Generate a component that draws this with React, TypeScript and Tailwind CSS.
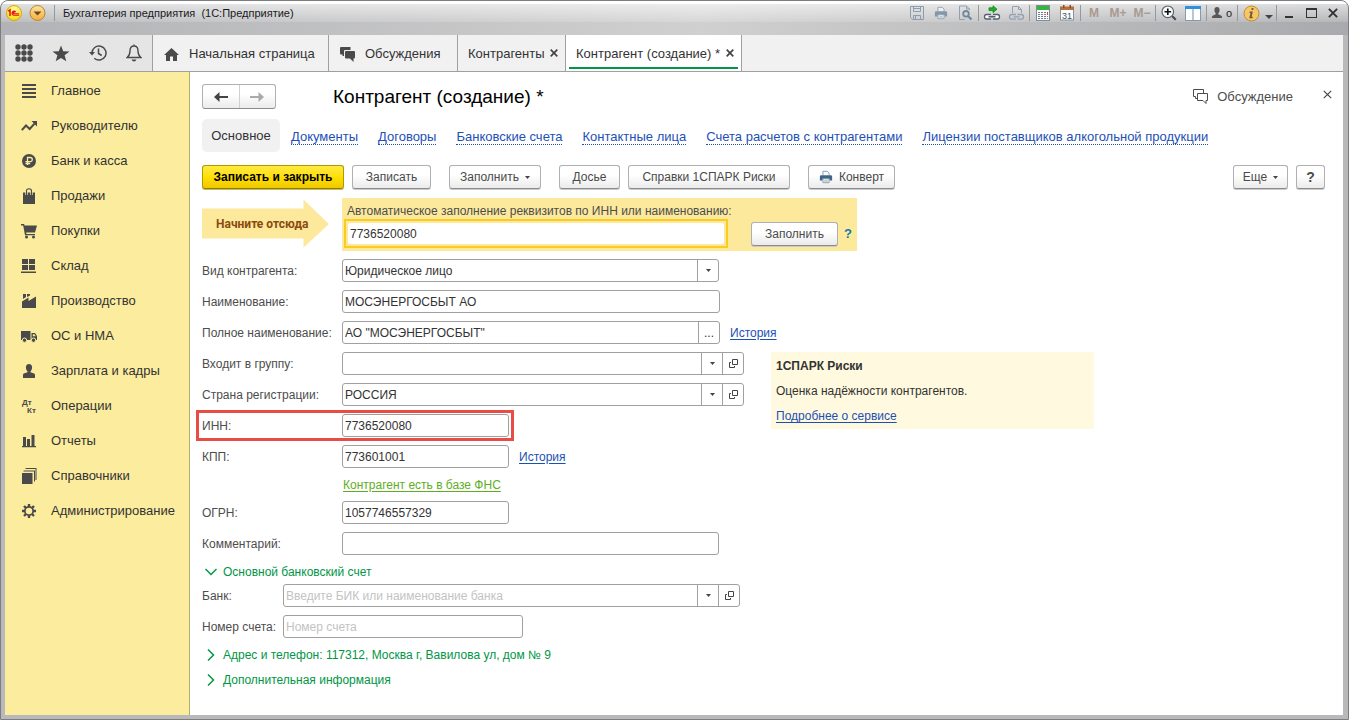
import React, { useState } from "react";

type Kids = { children?: React.ReactNode };

/* ---------- title bar icons ---------- */

const LogoIcon = () => (
  <svg width="16" height="16" viewBox="0 0 16 16" aria-hidden="true">
    <defs>
      <radialGradient id="logoFill" cx="0.5" cy="0.3" r="0.8">
        <stop offset="0" stopColor="#fffbb0" />
        <stop offset="0.6" stopColor="#ffe833" />
        <stop offset="1" stopColor="#f0c000" />
      </radialGradient>
    </defs>
    <circle cx="8" cy="8" r="7.5" fill="url(#logoFill)" stroke="#d8a916" />
    <path d="M2.2 6.2 4 5v6" fill="none" stroke="#e3120b" strokeWidth="1.5" />
    <path d="M9.700 6.800A2.100 2.100 0 1 0 8 10.300h5.200M8.900 7.600a.9.9 0 1 0-.8 1.200h5" fill="none" stroke="#e3120b" strokeWidth="1.100" />
  </svg>
);

const RoundArrowIcon = () => (
  <svg width="17" height="16" viewBox="0 0 17 16" aria-hidden="true">
    <defs>
      <linearGradient id="roundFill" x1="0" y1="0" x2="0" y2="1">
        <stop offset="0" stopColor="#fce3a0" />
        <stop offset="1" stopColor="#f5ae3d" />
      </linearGradient>
    </defs>
    <circle cx="8.5" cy="8" r="7.5" fill="url(#roundFill)" stroke="#b9832f" />
    <path d="M4.5 6.500h8l-4 4z" fill="#6a4b1e" />
  </svg>
);

const SaveIcon = () => (
  <svg width="16" height="16" viewBox="0 0 16 16" fill="none" stroke="#8c9db0" aria-hidden="true">
    <path d="M1.5 1.5h13v13h-11l-2-2z" />
    <path d="M4.5 1.5v5h7v-5M4.5 14.5v-4h7v4M5 3.5h6M6.500 11v3" />
  </svg>
);

const PrinterIcon = ({ color, dark }: { color: string; dark: string }) => (
  <svg width="14" height="14" viewBox="0 0 16 16" aria-hidden="true">
    <path d="M4.500 6V1.500h5l2 2V6" fill="#fff" fillOpacity="0.5" stroke={color} />
    <path d="M1 7.500q0-1.500 1.500-1.500h11q1.500 0 1.500 1.500V12h-3v-2H4v2H1z" fill={dark} />
    <path d="M4.500 10h7v4.500h-7z" fill="#fff" fillOpacity="0.7" stroke={color} />
    <path d="M6 12.500h4" stroke={color} />
  </svg>
);

const PreviewIcon = () => (
  <svg width="16" height="16" viewBox="0 0 16 16" fill="none" stroke="#8fa0b2" aria-hidden="true">
    <path d="M12.500 5v-1l-3-3h-7v13.500h5M9.500 1v3h3" />
    <circle cx="9" cy="8.800" r="2.800" stroke="#71879c" strokeWidth="1.800" />
    <path d="m11 11 3.500 3.500" stroke="#71879c" strokeWidth="2.200" />
  </svg>
);

const LinkIcon = () => (
  <svg width="18" height="16" viewBox="0 0 18 16" fill="none" aria-hidden="true">
    <path d="M6 2.800h4V.8l4 3.400-4 3.400v-2H6z" fill="#16b31c" stroke="#0b7d13" strokeWidth=".7" />
    <path d="M8 9.500H3.500q-2 0-2 2.200t2 2.300H8M10 9.500h4.500q2 0 2 2.200t-2 2.300H10" fill="#fff" stroke="#55606c" strokeWidth="1.300" />
    <path d="M5.500 11.700h7" stroke="#55606c" strokeWidth="1.600" />
  </svg>
);

const LinkDocIcon = () => (
  <svg width="17" height="16" viewBox="0 0 17 16" fill="none" stroke="#93a1b1" aria-hidden="true">
    <path d="M4.500 8V1.500h6l3 3V8M10.500 1.500v3h3" />
    <path d="M8 9.500H3.500q-2 0-2 2.300t2 2.300H8M9.500 9.500h4q2 0 2 2.300t-2 2.300h-4M5.500 11.800h6" strokeWidth="1.300" />
  </svg>
);

const CalculatorIcon = () => (
  <svg width="14" height="16" viewBox="0 0 14 16" aria-hidden="true">
    <rect x=".5" y=".5" width="13" height="15" fill="#f7f9fa" stroke="#7f8d98" />
    <rect x="1" y="1" width="12" height="4" fill="#35b53a" />
    <g fill="#75828d">
      <path d="M2 7h2v1H2zM5 7h2v1H5zM2 9h2v1H2zM5 9h2v1H5zM8 9h2v1H8zM2 11h2v1H2zM5 11h2v1H5zM8 11h2v1H8zM11 11h1v1h-1zM2 13h2v1H2zM5 13h2v1H5zM8 13h2v1H8zM11 13h1v1h-1zM8 7h2v1H8z" />
    </g>
    <path d="M11 7h1v3h-1z" fill="#e2383f" />
  </svg>
);

const CalendarIcon = () => (
  <svg width="14" height="16" viewBox="0 0 14 16" aria-hidden="true">
    <rect x=".5" y="2.500" width="13" height="12.500" fill="#fafcfd" stroke="#8494a5" />
    <path d="M0 1.500h14V5H0z" fill="#b5703e" />
    <path d="M3 0h1.500v3H3zM9.500 0H11v3H9.500z" fill="#8a4c22" />
    <text x="7" y="13.500" fontSize="9" fontFamily="Liberation Sans, sans-serif" textAnchor="middle" fill="#47525e">31</text>
  </svg>
);

const ZoomIcon = () => (
  <svg width="16" height="16" viewBox="0 0 16 16" fill="none" aria-hidden="true">
    <path d="m11 11 3.800 3.800" stroke="#3f4a55" strokeWidth="2" />
    <circle cx="6.800" cy="6.800" r="5.800" fill="#f6f8f9" stroke="#5a646e" strokeWidth="1.200" />
    <path d="M6.800 3.500v6.600M3.500 6.800h6.600" stroke="#111" strokeWidth="1.600" />
  </svg>
);

const PanesIcon = () => (
  <svg width="16" height="15" viewBox="0 0 16 15" aria-hidden="true">
    <rect x=".5" y=".5" width="15" height="14" fill="#fff" stroke="#8299ae" />
    <path d="M0 0h16v3H0z" fill="#2f8fe0" />
    <path d="M8 3v11" stroke="#7b8c9c" />
  </svg>
);

const UserIcon = () => (
  <svg width="10" height="12" viewBox="0 0 10 12" aria-hidden="true">
    <path d="M5 0c1.700 0 2.600 1.200 2.600 2.900C7.600 4.500 7 5.600 6.300 6v1.300l3 1.500q.7.400.7 1.500V11H0v-.7q0-1.100.7-1.500l3-1.500V6C3 5.600 2.400 4.500 2.400 2.900 2.400 1.200 3.300 0 5 0z" fill="#575757" />
  </svg>
);

const InfoIcon = () => (
  <svg width="17" height="17" viewBox="0 0 17 17" aria-hidden="true">
    <circle cx="8.500" cy="8.500" r="7.500" fill="#f7c766" stroke="#c08b35" />
    <path d="M8.700 3h1.900l-.4 2H8.300zM6.700 6.500h3.200l-1.300 5.300h1.300l-.3 1.400H6.200l1.300-5.300H6.400z" fill="#6f5c3d" />
  </svg>
);

/* ---------- command bar and section icons ---------- */

const GridDots = () => (
  <svg width="18" height="18" viewBox="0 0 18 18" fill="#4a4a4a" aria-hidden="true">
    {[3, 9, 15].map((y) => [3, 9, 15].map((x) => <circle key={x + "-" + y} cx={x} cy={y} r="2.700" />))}
  </svg>
);

const StarIcon = () => (
  <svg width="18" height="17" viewBox="0 0 18 17" fill="#4a4a4a" aria-hidden="true">
    <path d="m9 .5 2.200 5.700 6.300.3-4.900 3.800 1.700 6L9 12.900l-5.300 3.400 1.700-6L.5 6.500l6.300-.3z" />
  </svg>
);

const HistoryIcon = () => (
  <svg width="18" height="18" viewBox="0 0 18 18" fill="none" stroke="#4a4a4a" strokeWidth="1.500" aria-hidden="true">
    <path d="M3 9a7 7 0 1 1 2.300 5.200" />
    <path d="M0 8h6l-3 3.500z" fill="#4a4a4a" stroke="none" />
    <path d="M9.500 4.500v5l3.200 2" />
  </svg>
);

const BellIcon = () => (
  <svg width="16" height="18" viewBox="0 0 16 18" fill="none" stroke="#4a4a4a" strokeWidth="1.400" aria-hidden="true">
    <path d="M8 2C5.200 2 4 4.200 4 7c0 3.500-1 5-2.800 6.500h13.600C13 12 12 10.500 12 7c0-2.800-1.200-5-4-5zM8 .5V2" />
    <path d="M5.500 15.500h5q-.8 2-2.500 2t-2.500-2z" fill="#4a4a4a" stroke="none" />
  </svg>
);

const HomeIcon = () => (
  <svg width="15" height="13" viewBox="0 0 15 13" fill="#4a4a4a" aria-hidden="true">
    <path d="M7.500 0 15 7h-2v6H9V8.500H6V13H2V7H0z" />
  </svg>
);

const ChatsIcon = () => (
  <svg width="15" height="15" viewBox="0 0 15 15" fill="#4a4a4a" aria-hidden="true">
    <path d="M1 0h9.500v3H5Q4 3 4 4v5H2.500v-1.500H1q-1 0-1-1V1q0-1 1-1z" />
    <path d="M6 4h8q1 0 1 1v5.500q0 1-1 1h-.5V15L10 11.500H6q-1 0-1-1V5q0-1 1-1z" />
  </svg>
);

const ChatOutlineIcon = () => (
  <svg width="15" height="15" viewBox="0 0 15 15" fill="none" stroke="#4d4d4d" aria-hidden="true">
    <path d="M4.500 9.500H2.500v-2h-2v-7h10v4" />
    <path d="M4.500 4.500h10v7h-1.500v3l-3-3H4.500z" />
  </svg>
);

const sectionIcons: Record<string, React.ReactNode> = {
  main: <path d="M1 1h14v2H1zM1 5h14v2H1zM1 9h14v2H1zM1 13h14v2H1z" />,
  chart: (
    <>
      <path d="m.8 12.200 4.200-4.700 3.700 3.500 4.800-5.300" fill="none" stroke="#4a4a4a" strokeWidth="2" />
      <path d="M10.500 3H16v5.500z" />
    </>
  ),
  ruble: (
    <>
      <circle cx="8" cy="8" r="7" />
      <path d="M6.500 12V4.500h2.700a2 2 0 0 1 0 4.200H4.500M4.500 10.500h4.700" fill="none" stroke="#fcec9e" strokeWidth="1.300" />
    </>
  ),
  bag: (
    <>
      <path d="M2 4.500h12V16H2z" />
      <path d="M5.500 7V3q0-2.200 2.500-2.200T10.500 3v4" fill="none" stroke="#fcec9e" strokeWidth="2.400" />
      <path d="M5.500 7V3q0-2.200 2.500-2.200T10.500 3v4" fill="none" stroke="#4a4a4a" strokeWidth="1.100" />
    </>
  ),
  cart: (
    <>
      <path d="M0 1h3l.6 1.500H16L14 9.500H5.200l.2 1.500H14v1.200H4L2.200 2.400H0z" />
      <circle cx="5.500" cy="14" r="1.500" />
      <circle cx="12.500" cy="14" r="1.500" />
    </>
  ),
  store: <path d="M1 1h6v5H1zM8 1h6v5H8zM1 7h6v5H1zM8 7h6v5H8zM0 13.500h15V15H0z" />,
  factory: <path d="M2 1h3v3L2 6zM6 1h3v1.500L6 4zM1 8.500l6.500-4V8l7.500-4.500V15H1z" />,
  truck: (
    <>
      <path d="M0 3h9.500v9H0zM10.500 5H14l2 3v4h-5.500z" />
      <path d="M11.800 6.200h1.700l1.200 2h-2.900z" fill="#fcec9e" />
      <circle cx="3.500" cy="12.200" r="2.200" stroke="#fcec9e" />
      <circle cx="12.500" cy="12.200" r="2.200" stroke="#fcec9e" />
    </>
  ),
  person: <path d="M8 1c2 0 3.100 1.400 3.100 3.300 0 1.900-.8 3.500-1.600 4v.9l3.700 1.300q.8.400.8 1.700V15H2v-2.800q0-1.300.8-1.700l3.700-1.300v-.9c-.8-.5-1.600-2.100-1.600-4C4.900 2.400 6 1 8 1z" />,
  ops: (
    <>
      <text x="1" y="6.500" fontSize="8" fontWeight="700" fontFamily="Liberation Sans, sans-serif">Дт</text>
      <text x="6" y="15" fontSize="8" fontWeight="700" fontFamily="Liberation Sans, sans-serif">Кт</text>
    </>
  ),
  bars: <path d="M2 4h3v9H2zM6 6h3v7H6zM10.500 2h3v11h-3zM1 13h14v1.200H1z" />,
  books: <path d="M1 5h10.500v11H1zM2.500 2.500H14v11h-1v-10H2.500zM4.500 0H15.500v12h-1V1h-10z" />,
  gear: (
    <>
      <g stroke="#4a4a4a" strokeWidth="2.400">
        <path d="M8 1v14M1 8h14M3 3l10 10M13 3 3 13" />
      </g>
      <circle cx="8" cy="8" r="5" />
      <circle cx="8" cy="8" r="3.300" fill="#fcec9e" />
    </>
  ),
};

const sections = [
  ["main", "Главное"],
  ["chart", "Руководителю"],
  ["ruble", "Банк и касса"],
  ["bag", "Продажи"],
  ["cart", "Покупки"],
  ["store", "Склад"],
  ["factory", "Производство"],
  ["truck", "ОС и НМА"],
  ["person", "Зарплата и кадры"],
  ["ops", "Операции"],
  ["bars", "Отчеты"],
  ["books", "Справочники"],
  ["gear", "Администрирование"],
];

const links = [
  "Документы",
  "Договоры",
  "Банковские счета",
  "Контактные лица",
  "Счета расчетов с контрагентами",
  "Лицензии поставщиков алкогольной продукции",
];

const CaretIcon = () => (
  <svg width="5" height="3" viewBox="0 0 5 3" aria-hidden="true">
    <path d="M0 0h5L2.500 3z" fill="#444" />
  </svg>
);

const OpenIcon = () => (
  <svg width="9" height="9" viewBox="0 0 9 9" fill="none" stroke="#444" aria-hidden="true">
    <path d="M3.500.5h5v5h-5zM2 3.500H.5v5h5V7" />
  </svg>
);

const CrossIcon = ({ size, stroke, width }: { size: number; stroke: string; width: number }) => (
  <svg width={size} height={size} viewBox="0 0 8 8" fill="none" stroke={stroke} strokeWidth={width} aria-hidden="true">
    <path d="m.7.7 6.600 6.600M7.300.7.7 7.300" />
  </svg>
);

const ArrowIcon = ({ color, flip }: { color: string; flip?: boolean }) => (
  <svg width="14" height="10" viewBox="0 0 14 10" className={flip ? "rotate-180" : ""} aria-hidden="true">
    <path d="M0 5 5.500 0v10z" fill={color} />
    <path d="M4 5h10" stroke={color} strokeWidth="2" />
  </svg>
);

const ChevronIcon = ({ open }: { open: boolean }) => (
  <svg width="14" height="14" viewBox="0 0 14 14" fill="none" stroke="#009646" strokeWidth="1.500" aria-hidden="true">
    {open ? <path d="m1.500 4 5.500 5.500L12.500 4" /> : <path d="M4 1.500 9.500 7 4 12.500" />}
  </svg>
);

/* ---------- building blocks ---------- */

const Sep = () => <span className="mx-px h-4 w-px bg-[#97989b]" />;

const TitleButton = ({ label, className = "w-6", children }: Kids & { label: string; className?: string }) => (
  <button type="button" aria-label={label} className={"flex h-5 items-center justify-center " + className}>
    {children}
  </button>
);

const Button = ({ className = "", label, children }: Kids & { className?: string; label?: string }) => (
  <button
    type="button"
    aria-label={label}
    className={
      "flex h-6 shrink-0 items-center justify-center whitespace-nowrap rounded-[3px] border border-[#b0b0b0] border-b-[#8c8c8c] bg-linear-to-b from-white from-40% to-[#ebebeb] text-[#4a4a4a] shadow-[0_1px_0_#c9c9c9] " +
      className
    }
  >
    {children}
  </button>
);

const inputClass = "h-full w-full min-w-0 flex-1 bg-transparent pl-0.5 text-[#333] outline-none placeholder:text-[#c3c3c3]";

type FieldProps = {
  id: string;
  label: string;
  width: string;
  value?: string;
  placeholder?: string;
  buttons?: ("caret" | "open" | "dots")[];
  labelWidth?: string;
  children?: React.ReactNode;
};

const buttonNames = { caret: "Выбрать из списка", open: "Открыть", dots: "Изменить" };

const Field = ({ id, label, width, value = "", placeholder, buttons = [], labelWidth = "w-[140px]", children }: FieldProps) => {
  const [text, setText] = useState(value);
  return (
    <div className="flex h-[23px] items-center">
      <label htmlFor={id} className={"shrink-0 whitespace-nowrap text-[#4d4d4d] " + labelWidth}>
        {label}
      </label>
      <div className={"flex h-full shrink-0 overflow-hidden rounded-[3px] border border-[#a0a0a0] bg-white " + width}>
        <input id={id} value={text} placeholder={placeholder} onChange={(e) => setText(e.target.value)} className={inputClass} />
        {buttons.map((b) => (
          <button key={b} type="button" aria-label={buttonNames[b]} className="flex w-[21px] items-center justify-center border-l border-[#a0a0a0] text-[#333]">
            {b === "caret" ? <CaretIcon /> : b === "open" ? <OpenIcon /> : <span>...</span>}
          </button>
        ))}
      </div>
      {children}
    </div>
  );
};

const TextLink = ({ className = "text-[#1d50b5] decoration-[#1d50b5]", children }: Kids & { className?: string }) => (
  <a href="#" className={"whitespace-nowrap underline underline-offset-2 " + className}>
    {children}
  </a>
);

const Section = ({ open = false, children }: Kids & { open?: boolean }) => (
  <button type="button" aria-expanded={open} className="flex h-[25px] items-center gap-[5px] whitespace-nowrap pl-0.5 text-[#009646]">
    <ChevronIcon open={open} />
    {children}
  </button>
);

/* ---------- page parts ---------- */

const TitleBar = () => (
  <header className="flex h-[34px] items-start justify-between rounded-t-[7px] bg-[linear-gradient(to_bottom,#ffffff_0,#ffffff_3px,rgba(255,255,255,0.6)_3px,rgba(255,255,255,0.15)_21px,transparent_21px),linear-gradient(to_right,#b2b3b6,#d0d0d0_52%,#a9aaad)] pl-1 pr-1 pt-0.5">
    <div className="flex items-center gap-[7px] pl-px">
      <TitleButton label="1С" className="w-4">
        <LogoIcon />
      </TitleButton>
      <TitleButton label="Главное меню" className="w-[17px]">
        <RoundArrowIcon />
      </TitleButton>
      <Sep />
      <span className="whitespace-pre text-[11px] text-[#1a1a1a]">{"Бухгалтерия предприятия  (1С:Предприятие)"}</span>
    </div>
    <div className="flex items-center">
      <TitleButton label="Сохранить"><SaveIcon /></TitleButton>
      <TitleButton label="Печать"><PrinterIcon color="#8c9db0" dark="#8496a9" /></TitleButton>
      <TitleButton label="Просмотр"><PreviewIcon /></TitleButton>
      <Sep />
      <TitleButton label="Перейти по ссылке"><LinkIcon /></TitleButton>
      <TitleButton label="Получить ссылку"><LinkDocIcon /></TitleButton>
      <Sep />
      <TitleButton label="Калькулятор"><CalculatorIcon /></TitleButton>
      <TitleButton label="Календарь"><CalendarIcon /></TitleButton>
      <Sep />
      <div className="flex text-[12px] font-bold text-[#a89a90]">
        <TitleButton label="M">M</TitleButton>
        <TitleButton label="M+">M+</TitleButton>
        <TitleButton label="M-">M−</TitleButton>
      </div>
      <Sep />
      <TitleButton label="Масштаб"><ZoomIcon /></TitleButton>
      <TitleButton label="Окна"><PanesIcon /></TitleButton>
      <Sep />
      <TitleButton label="Пользователь" className="w-7 gap-1">
        <UserIcon />
        <span className="text-[11px] text-[#222]">o</span>
      </TitleButton>
      <Sep />
      <TitleButton label="Справка"><InfoIcon /></TitleButton>
      <TitleButton label="Ещё" className="w-3">
        <svg width="8" height="4" viewBox="0 0 8 4" className="mt-2" aria-hidden="true"><path d="M0 0h8L4 4z" fill="#444" /></svg>
      </TitleButton>
      <Sep />
      <TitleButton label="Свернуть" className="w-[22px]"><span className="mt-2 h-0.5 w-2 bg-[#333]" /></TitleButton>
      <TitleButton label="Развернуть" className="w-[22px]"><span className="h-[10px] w-[11px] border border-t-2 border-[#333]" /></TitleButton>
      <TitleButton label="Закрыть" className="w-[22px]"><CrossIcon size={10} stroke="#333" width={1.5} /></TitleButton>
    </div>
  </header>
);

const TabClose = ({ name }: { name: string }) => (
  <button type="button" aria-label={"Закрыть " + name} className="pb-0.5">
    <CrossIcon size={8} stroke="#444" width={1.7} />
  </button>
);

const TabBar = () => (
  <div className="flex h-[37px] border-b border-[#a0a0a0] bg-[#f1f1f1] text-[#333]">
    <div className="flex w-[148px] shrink-0 items-center justify-between border-r border-[#a0a0a0] bg-[#e5e5e5] pl-2.5 pr-2.5">
      <button type="button" aria-label="Разделы"><GridDots /></button>
      <button type="button" aria-label="Избранное"><StarIcon /></button>
      <button type="button" aria-label="История"><HistoryIcon /></button>
      <button type="button" aria-label="Оповещения"><BellIcon /></button>
    </div>
    <nav className="flex whitespace-nowrap">
      <a href="#" className="flex w-[176px] items-center gap-2.5 border-r border-[#a0a0a0] pl-[11px] pt-0.5"><HomeIcon />Начальная страница</a>
      <a href="#" className="flex w-[129px] items-center gap-2.5 border-r border-[#a0a0a0] pl-[11px] pt-0.5"><ChatsIcon />Обсуждения</a>
      <div className="flex w-[108px] items-center justify-between border-r border-[#a0a0a0] pl-2.5 pr-[7px] pt-0.5">
        <a href="#">Контрагенты</a>
        <TabClose name="Контрагенты" />
      </div>
      <div className="flex w-[176px] border-r border-[#a0a0a0] bg-white px-[3px] pb-0.5">
        <div className="flex flex-1 items-center justify-between border-b-2 border-[#009646] pl-[7px] pr-1 pt-1.5">
          <a href="#" aria-current="page">Контрагент (создание) *</a>
          <TabClose name="Контрагент (создание)" />
        </div>
      </div>
    </nav>
  </div>
);

const Sidebar = () => (
  <nav className="w-[185px] shrink-0 border-r border-[#b3ad6c] bg-[#fcec9e] pt-px">
    {sections.map(([icon, name]) => (
      <a key={icon} href="#" className="flex h-[35px] items-center gap-[14px] whitespace-nowrap pl-4 text-[#333]">
        <svg width="16" height="16" viewBox="0 0 16 16" fill="#4a4a4a" className="shrink-0" aria-hidden="true">
          {sectionIcons[icon]}
        </svg>
        {name}
      </a>
    ))}
  </nav>
);

const QuickFill = () => {
  const [inn, setInn] = useState("7736520080");
  return (
    <div className="mt-[9px] flex h-[53px] items-start">
      <div className="relative mr-[13px] h-[50px] w-[127px] shrink-0">
        <svg width="127" height="50" viewBox="0 0 127 50" aria-hidden="true">
          <path d="M0 10.500h101.500V1.500L127 26l-25.500 23.500V40.500H0z" fill="#fce99c" />
        </svg>
        <span className="absolute inset-y-0 left-3.5 flex items-center whitespace-nowrap pt-0.5 font-['Roboto',sans-serif] text-[12px] font-bold text-[#8a4a10]">
          Начните отсюда
        </span>
      </div>
      <div className="flex h-full w-[515px] shrink-0 flex-col bg-[#fce99c] px-0.5 pt-[5px]">
        <label htmlFor="quick" className="pl-[3px] leading-4 text-[#4d4d4d]">
          Автоматическое заполнение реквизитов по ИНН или наименованию:
        </label>
        <div className="flex items-center">
          <div className="h-[29px] w-[384px] border-2 border-[#fbcb1f] p-0.5">
            <input id="quick" value={inn} onChange={(e) => setInn(e.target.value)} className="h-full w-full rounded-[2px] bg-white pl-0.5 text-[#333] outline-none" />
          </div>
          <Button className="ml-[23px] w-[87px]">Заполнить</Button>
          <a href="#" className="ml-1.5 text-[13px] font-bold text-[#1278a8]">?</a>
        </div>
      </div>
    </div>
  );
};

const Main = () => (
  <main className="min-w-0 flex-1 bg-white pl-3 pr-[18px] pt-3 text-[12px]">
    <div className="flex h-[25px] items-center">
      <div className="flex h-[25px] w-[74px] rounded-[3px] border border-[#b0b0b0] border-b-[#8c8c8c] bg-linear-to-b from-white from-40% to-[#ebebeb]">
        <button type="button" aria-label="Назад" className="flex flex-1 items-center justify-center border-r border-[#d0d0d0]"><ArrowIcon color="#444" /></button>
        <button type="button" aria-label="Вперед" className="flex flex-1 items-center justify-center"><ArrowIcon color="#aaa" flip /></button>
      </div>
      <h1 className="ml-[57px] flex-1 text-[19px] leading-6 text-black">Контрагент (создание) *</h1>
      <button type="button" className="flex items-center gap-[9px] text-[13px] text-[#4d4d4d]"><ChatOutlineIcon />Обсуждение</button>
      <button type="button" aria-label="Закрыть форму" className="-mr-2 ml-[29px] p-px pb-1.5"><CrossIcon size={9} stroke="#444" width={1} /></button>
    </div>

    <nav className="mt-2.5 flex h-[33px] items-center gap-5 whitespace-nowrap text-[13px]">
      <a href="#" aria-current="page" className="-mr-[9px] flex h-full w-[78px] items-center justify-center rounded-[5px] bg-[#f1f1f1] text-[#333]">Основное</a>
      {links.map((l) => (
        <a key={l} href="#" className="border-b border-dotted border-[#1d50b5] pt-[3px] leading-[14px] text-[#1d50b5]">{l}</a>
      ))}
    </nav>

    <div className="mt-[13px] flex items-center">
      <button type="button" className="h-6 w-[142px] shrink-0 whitespace-nowrap rounded-[3px] border border-[#b09a00] border-b-[#8f7d00] bg-linear-to-b from-[#ffea3d] via-[#ffdf00] to-[#efc900] font-bold text-black shadow-[0_1px_0_#c9b95a]">Записать и закрыть</button>
      <Button className="ml-2 w-[79px]">Записать</Button>
      <Button className="ml-[18px] w-[92px] gap-1.5">Заполнить<CaretIcon /></Button>
      <Button className="ml-[18px] w-[61px]">Досье</Button>
      <Button className="ml-2 w-[162px]">Справки 1СПАРК Риски</Button>
      <Button className="ml-[18px] w-[87px] gap-1.5"><PrinterIcon color="#7d93a6" dark="#3f6587" />Конверт</Button>
      <Button className="ml-auto w-[55px] gap-1.5">Еще<CaretIcon /></Button>
      <Button className="ml-2 w-[29px] font-bold" label="Справка"><span className="text-[14px]">?</span></Button>
    </div>

    <QuickFill />

    <form className="mt-2 flex flex-col gap-2" onSubmit={(e) => e.preventDefault()}>
      <div className="flex h-[23px] items-center">
        <label htmlFor="kind" className="w-[140px] shrink-0 text-[#4d4d4d]">Вид контрагента:</label>
        <div className="relative h-full w-[377px]">
          <select id="kind" className="h-full w-full appearance-none rounded-[3px] border border-[#a0a0a0] bg-white pl-0.5 text-[#333] outline-none">
            <option>Юридическое лицо</option>
          </select>
          <span className="pointer-events-none absolute inset-y-0 right-px flex w-[21px] items-center justify-center border-l border-[#a0a0a0]"><CaretIcon /></span>
        </div>
      </div>
      <Field id="name" label="Наименование:" width="w-[378px]" value="МОСЭНЕРГОСБЫТ АО" />
      <Field id="full" label="Полное наименование:" width="w-[378px]" value={'АО "МОСЭНЕРГОСБЫТ"'} buttons={["dots"]}>
        <span className="ml-2.5"><TextLink>История</TextLink></span>
      </Field>
      <div className="flex h-[85px] items-start">
        <div className="flex w-[569px] shrink-0 flex-col gap-2">
          <Field id="group" label="Входит в группу:" width="w-[402px]" buttons={["caret", "open"]} />
          <Field id="country" label="Страна регистрации:" width="w-[402px]" value="РОССИЯ" buttons={["caret", "open"]} />
          <div className="relative w-[307px]">
            <Field id="inn" label="ИНН:" width="w-[167px]" value="7736520080" />
            <span className="pointer-events-none absolute -bottom-1 -left-1.5 -right-[5px] -top-1 border-3 border-[#e84c45]" />
          </div>
        </div>
        <aside className="flex h-[77px] w-[323px] flex-col gap-[9px] bg-[#fff9e0] pl-[5px] pt-1.5 leading-4 text-[#333]">
          <b>1СПАРК Риски</b>
          <span>Оценка надёжности контрагентов.</span>
          <span><TextLink>Подробнее о сервисе</TextLink></span>
        </aside>
      </div>
      <Field id="kpp" label="КПП:" width="w-[167px]" value="773601001">
        <span className="ml-2.5"><TextLink>История</TextLink></span>
      </Field>
      <div className="flex h-[17px] items-center pl-[141px]">
        <TextLink className="text-[#5eae1e] decoration-[#5eae1e]">Контрагент есть в базе ФНС</TextLink>
      </div>
      <Field id="ogrn" label="ОГРН:" width="w-[167px]" value="1057746557329" />
      <Field id="comment" label="Комментарий:" width="w-[377px]" />
    </form>

    <div className="mt-1">
      <Section open>Основной банковский счет</Section>
      <div className="flex flex-col gap-2">
        <Field id="bank" label="Банк:" labelWidth="w-[81px]" width="w-[457px]" placeholder="Введите БИК или наименование банка" buttons={["caret", "open"]} />
        <Field id="account" label="Номер счета:" labelWidth="w-[81px]" width="w-[240px]" placeholder="Номер счета" />
      </div>
      <div className="mt-1">
        <Section>Адрес и телефон: 117312, Москва г, Вавилова ул, дом № 9</Section>
        <Section>Дополнительная информация</Section>
      </div>
    </div>
  </main>
);

export default function App() {
  return (
    <div className="flex min-h-screen flex-col rounded-t-lg border border-[#7d7d80] bg-[#b9b9bb] font-['Liberation_Sans',Arial,sans-serif] text-[13px] leading-4">
      <TitleBar />
      <div className="mb-1 ml-1 mr-[5px] flex flex-1 flex-col bg-white">
        <TabBar />
        <div className="flex flex-1">
          <Sidebar />
          <Main />
        </div>
      </div>
    </div>
  );
}
